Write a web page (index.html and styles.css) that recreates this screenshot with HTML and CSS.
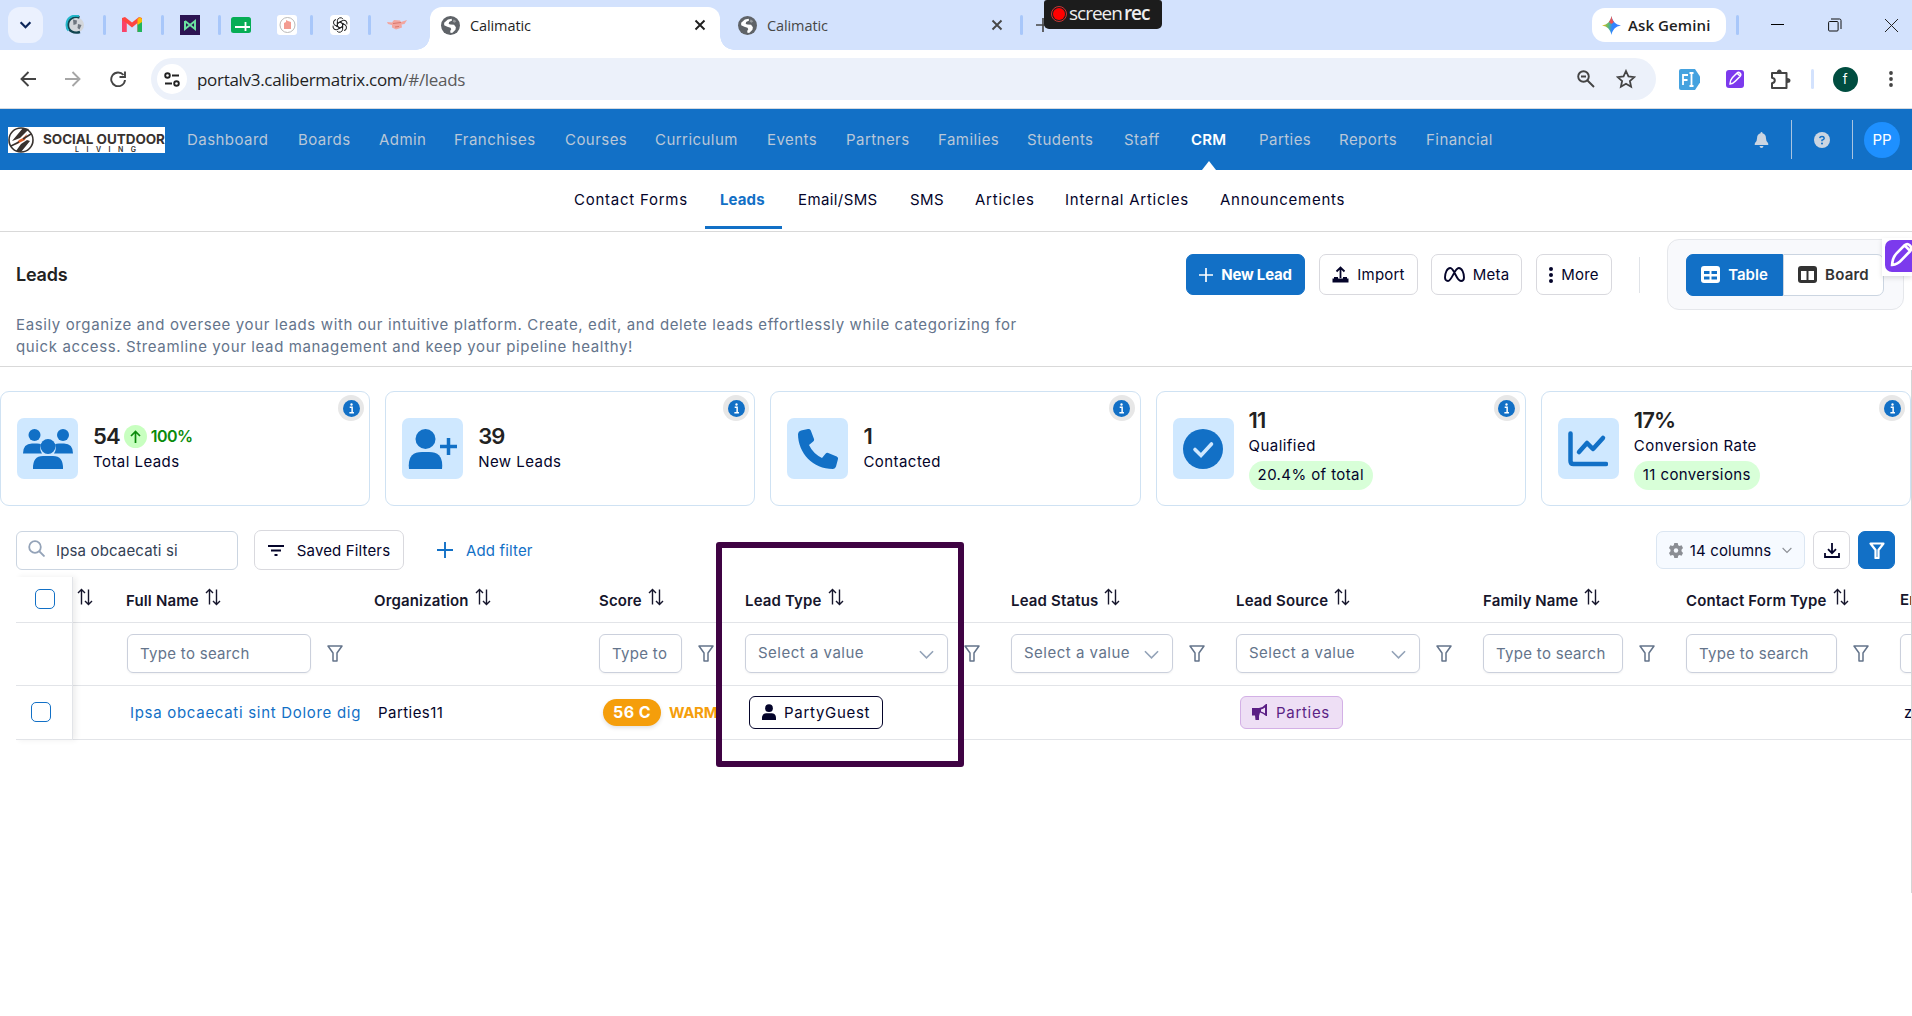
FILE: index.html
```
<!DOCTYPE html>
<html lang="en">
<head>
    <meta charset="UTF-8">
    <meta name="viewport" content="width=device-width, initial-scale=1.0">
    <title>Calimatic</title>
    <link rel="stylesheet" href="styles.css">
</head>
<body>

<!-- Shared icons -->
<svg class="sprite">
    <symbol id="globe" viewBox="0 0 18 18"><circle cx="9" cy="9" r="9" fill="#5f6368"/><path d="M3 6.500l3.500-3.200 3.600-.8.4 1.800-2.800 1.400-.4 1.800 1.800.5 3.300.3 1.700 2.400-.4 2.300-2.800 2.800-1.800.4-.4-2 1-1.600-.7-1.500-3-.8L3 8.800z" fill="#fff"/><path d="M12 3l2.500 2-1.500 1.500-2-1z" fill="#fff" opacity=".35"/></symbol>
    <symbol id="close" viewBox="0 0 12 12"><path d="M1.500 1.500l9 9M10.500 1.500l-9 9" fill="none" stroke="currentColor" stroke-width="1.900"/></symbol>
    <symbol id="sort" viewBox="0 0 16 18"><path d="M4.500 16.500V1.500M1 5l3.500-3.500L8 5M11.500 1.500v15M8 13l3.500 3.500L15 13" fill="none" stroke="currentColor" stroke-width="1.400"/></symbol>
    <symbol id="funnel" viewBox="0 0 16 17"><path d="M1 1h14L10 8v8H6V8z" fill="none" stroke="currentColor" stroke-width="1.500" stroke-linejoin="round"/></symbol>
    <symbol id="funnel-bold" viewBox="0 0 16 17"><path d="M1.500 1.500h13L9.500 8v8h-3V8z" fill="none" stroke="currentColor" stroke-width="2.200" stroke-linejoin="round"/></symbol>
    <symbol id="chevron" viewBox="0 0 16 10"><path d="M1 1l7 7 7-7" fill="none" stroke="currentColor" stroke-width="1.700"/></symbol>
    <symbol id="plus" viewBox="0 0 16 16"><path d="M8 0v16M0 8h16" stroke="currentColor" stroke-width="1.900"/></symbol>
    <symbol id="user" viewBox="0 0 16 18"><circle cx="8" cy="4.600" r="4.400" fill="currentColor"/><path d="M0 18v-2.500C0 12 2.500 10.500 5 10.500h6c2.500 0 5 1.500 5 5V18z" fill="currentColor"/></symbol>
    <symbol id="info" viewBox="0 0 16 16"><circle cx="8" cy="8" r="8" fill="#1270c6"/><path d="M6.300 6.800h2.300v5M6 12h4.300" fill="none" stroke="#fff" stroke-width="1.400"/><circle cx="8" cy="4.200" r="1.100" fill="#fff"/></symbol>
    <symbol id="pen" viewBox="0 0 18 18"><path d="M4 14c.2-3 1-5 2.500-6.500L11 3c2-1.800 5 1 3.200 3.200L9.500 11C8 12.700 6.300 13.800 4 14zM11 3l3.200 3.200" fill="none" stroke="#fff" stroke-width="1.500"/></symbol>
</svg>

<!-- Tabs -->
<div class="tabstrip">
    <span class="tab-search"><svg width="13" height="8" viewBox="0 0 14 9"><path d="M1.500 1.500L7 7l5.500-5.500" fill="none" stroke="#0b2559" stroke-width="2.500"/></svg></span>
    <svg class="fav" viewBox="0 0 20 20"><circle cx="11.500" cy="10" r="7.500" fill="#d3d6da"/><path d="M8 4.500l4 1-.5 3.500-3 1zM13 9l3.500 1-2 4.500-2-1.500z" fill="#6f767f"/><path d="M14.500 2.500C9 .5 3 4 3 10s6 9 12 7" fill="none" stroke="#10444f" stroke-width="2.400"/><path d="M14 1C7-.5 1.500 3 1.500 10c0 2 .5 4 2 5.500" fill="none" stroke="#22b7ca" stroke-width="2"/></svg>
    <span class="sep"></span>
    <svg class="fav" viewBox="0 0 20 20"><path d="M0 3v14h4.500V8L10 12.500 15.500 8v9H20V3l-3-1-7 5.500L3 2z" fill="#ff4540"/><path d="M0 17V5l4.500 3v9z" fill="#f9436a"/><path d="M15.500 9L20 6v11h-4.500z" fill="#20b65b"/><path d="M15.500 4L18 2l2 2v3l-4.500 3z" fill="#fcbc05"/></svg>
    <span class="sep"></span>
    <svg class="fav" viewBox="0 0 20 20"><path d="M0 0h20v20H0z" fill="#2b1452"/><path d="M5 6v8l10-8v8L5 6" fill="none" stroke="#6be0a0" stroke-width="2"/></svg>
    <span class="sep"></span>
    <svg class="fav" viewBox="0 0 20 20"><rect y="2" width="20" height="16" rx="2.500" fill="#06ad55"/><path d="M4 12h15M14.500 7v9" stroke="#fff" stroke-width="1.800"/></svg>
    <svg class="fav" viewBox="0 0 20 20"><rect width="20" height="20" rx="3" fill="#fff"/><circle cx="10.500" cy="10" r="7.500" fill="#fff" stroke="#b9b9b9"/><path d="M7 14V8l2-1V5l2 1 3 1v7z" fill="#f39c91"/></svg>
    <span class="sep"></span>
    <svg class="fav" viewBox="0 0 20 20"><rect width="20" height="20" rx="4" fill="#fff"/><g fill="none" stroke="#222" stroke-width="1"><path id="knot" d="M7.400 8.500V5.200A3.200 3.200 0 0 1 12.800 3.700M7.400 8.500l2.600-1.500 4 2.300"/><use href="#knot" transform="rotate(60 10 10)"/><use href="#knot" transform="rotate(120 10 10)"/><use href="#knot" transform="rotate(180 10 10)"/><use href="#knot" transform="rotate(240 10 10)"/><use href="#knot" transform="rotate(300 10 10)"/></g></svg>
    <span class="sep"></span>
    <svg class="fav" viewBox="0 0 20 20"><path d="M0 7l5 .5L7 5l6 .5 1 1.500L20 5l-2.500 4-3 .5.500 3L9 14.500 5 12.500 5 10 1 9z" fill="#f2a6a0"/><path d="M6 8.500l8-1M8 12l4-.5" stroke="#d9776c"/></svg>
    <div class="tab active">
        <svg width="19" height="19"><use href="#globe"/></svg>
        <span>Calimatic</span>
        <svg class="x" width="12" height="12"><use href="#close"/></svg>
    </div>
    <div class="tab">
        <svg width="19" height="19"><use href="#globe"/></svg>
        <span>Calimatic</span>
        <svg class="x" width="12" height="12"><use href="#close"/></svg>
    </div>
    <span class="sep"></span>
    <svg width="14" height="14" class="new-tab"><use href="#plus"/></svg>
    <div class="gemini">
        <svg width="19" height="19" viewBox="0 0 18 18"><defs><linearGradient id="gem" x1="0" y1=".4" x2="1" y2=".5"><stop offset="0" stop-color="#fbbc04"/><stop offset=".35" stop-color="#5bb974"/><stop offset=".55" stop-color="#3186ff"/><stop offset="1" stop-color="#3f80ff"/></linearGradient></defs><path d="M9 0c.8 5 4 8.200 9 9-5 .8-8.200 4-9 9-.8-5-4-8.200-9-9 5-.8 8.200-4 9-9z" fill="url(#gem)"/><path d="M9 0c.5 3 1.200 4.500 2.300 5.800L9 7.500 6.500 5.800C7.700 4.300 8.600 2.500 9 0z" fill="#ea5357"/></svg>
        Ask Gemini
    </div>
    <span class="sep"></span>
    <svg width="13" height="13" viewBox="0 0 13 13"><path d="M0 5.500h13" stroke="#000"/></svg>
    <svg width="14" height="14" viewBox="0 0 14 14" fill="none" stroke="#111"><rect x=".6" y="3.500" width="9.500" height="9.500" rx="1"/><path d="M3 1h8.500q1.500 0 1.500 1.500V11"/></svg>
    <svg width="13" height="13" viewBox="0 0 13 13"><path d="M0 0l13 13M13 0L0 13" stroke="#222"/></svg>
    <div class="screenrec"><i></i>screen<b>rec</b></div>
</div>

<!-- Address bar -->
<div class="toolbar">
    <svg width="16" height="16" viewBox="0 0 16 16" fill="none" stroke="#444" stroke-width="1.900"><path d="M16 8H2M8.500 1L1.500 8l7 7"/></svg>
    <svg width="16" height="16" viewBox="0 0 16 16" fill="none" stroke="#a6a6a6" stroke-width="1.900"><path d="M0 8h14M7.500 1l7 7-7 7"/></svg>
    <svg width="16" height="16" viewBox="0 0 16 16" fill="none" stroke="#444" stroke-width="1.900"><path d="M13.500 4A6.900 6.900 0 1 0 15 9M15 .5v5.500H9.500"/></svg>
    <div class="address">
        <span class="site"><svg width="16" height="15" viewBox="0 0 16 15" fill="none" stroke="#222" stroke-width="1.900"><circle cx="3.500" cy="3.500" r="2.300"/><path d="M8 3.500h7M1 11.500h7"/><circle cx="12.500" cy="11.500" r="2.300"/></svg></span>
        <span class="url">portalv3.calibermatrix.com<em>/#/leads</em></span>
        <svg width="18" height="18" viewBox="0 0 18 18" fill="none" stroke="#444" stroke-width="1.900"><circle cx="6.500" cy="6.500" r="5.300"/><path d="M10.500 10.500l6.500 6.500M4 6.500h5"/></svg>
        <svg width="20" height="20" viewBox="0 0 18 18"><path d="M9 1.800l2.200 4.900 5.300.6-4 3.500 1.100 5.200L9 13.300 4.400 16l1.100-5.200-4-3.500 5.300-.6z" fill="none" stroke="#444" stroke-width="1.600"/></svg>
    </div>
    <svg width="21" height="21" viewBox="0 0 21 21"><path d="M2 0h14l5 7.500v6L16 21H2q-2 0-2-2V2q0-2 2-2z" fill="#45a2df"/><path d="M4 16V6h5M4 11h4.500M10.500 4h4M10.500 17h4M12.500 4v13" fill="none" stroke="#fff" stroke-width="1.800"/></svg>
    <span class="pen-ext"><svg width="18" height="18"><use href="#pen"/></svg></span>
    <svg width="21" height="21" viewBox="0 0 21 21"><path d="M2 4h14.500v15H2v-4.800q2.800-.5 2.800-2.700T2 8.800z" fill="none" stroke="#444" stroke-width="2" stroke-linejoin="round"/><path d="M6.800 4q0-3.500 2.500-3.500T11.800 4zM17 9q3.500 0 3.500 2.500T17 14z" fill="#444"/></svg>
    <span class="sep pale"></span>
    <span class="profile">f</span>
    <svg width="4" height="16" viewBox="0 0 4 16" fill="#444"><circle cx="2" cy="2" r="1.900"/><circle cx="2" cy="8" r="1.900"/><circle cx="2" cy="14" r="1.900"/></svg>
</div>

<!-- Main navigation -->
<header class="header">
    <div class="logo">
        <svg width="27" height="26" viewBox="0 0 27 26"><circle cx="13" cy="13" r="12" fill="#fff" stroke="#38322f" stroke-width="1.600"/><path d="M4 14L15 1l6 1-9 9-5 2zM13 25l9-11-3-1-6 4-5 7z" fill="#38322f"/><path d="M7 18l4-5 4-2 4-4-2 6-4 2z" fill="#e0602a"/><path d="M3 19l8-4M15 12l8-5" stroke="#38322f" stroke-width="1.500"/></svg>
        <div><strong>SOCIAL OUTDOOR</strong><small>LIVING</small></div>
    </div>
    <nav class="main-nav">
        <a>Dashboard</a><a>Boards</a><a>Admin</a><a>Franchises</a><a>Courses</a><a>Curriculum</a><a>Events</a><a>Partners</a><a>Families</a><a>Students</a><a>Staff</a><a class="current">CRM</a><a>Parties</a><a>Reports</a><a>Financial</a>
    </nav>
    <div class="header-right">
        <span><svg width="15" height="16" viewBox="0 0 15 16" fill="#cbd5e1"><path d="M7.500 0q1 0 1 1.300Q12 2.200 12 6.500q0 3 2 4.500.8 1.800 0 2H1q-.8-.2 0-2 2-1.500 2-4.500 0-4.300 3.500-5.200Q6.500 0 7.500 0zM5.500 14h4q-.3 2-2 2t-2-2z"/></svg></span>
        <span><svg width="16" height="16" viewBox="0 0 16 16"><circle cx="8" cy="8" r="8" fill="#cbd5e1"/><path d="M5.700 6.200Q6 4.500 8 4.500t2.200 1.700Q10.200 7.500 8 8.300v1" fill="none" stroke="#1270c6" stroke-width="1.500"/><circle cx="8" cy="11.500" r="1" fill="#1270c6"/></svg></span>
        <span class="avatar">PP</span>
    </div>
</header>

<nav class="sub-nav">
    <a>Contact Forms</a><a class="current">Leads</a><a>Email/SMS</a><a>SMS</a><a>Articles</a><a>Internal Articles</a><a>Announcements</a>
</nav>

<!-- Page heading -->
<section class="page-head">
    <div class="head-row">
        <h1>Leads</h1>
        <div class="actions">
            <button class="btn primary new"><svg width="14" height="14"><use href="#plus"/></svg>New Lead</button>
            <button class="btn import"><svg width="17" height="17" viewBox="0 0 17 17" fill="none" stroke="#04042a" stroke-width="1.800"><path d="M8.500 12V1.500M4.500 5.500l4-4 4 4"/><path d="M.5 14.500h16" stroke-width="4"/><path d="M2 12h4M11 12h4" stroke-width="2"/></svg>Import</button>
            <button class="btn meta"><svg width="21" height="15" viewBox="0 0 21 15"><path d="M1 10.500C1 6 3 1 6.200 1c4.300 0 6 13 10.800 13 2 0 3-1.500 3-3.500C20 6 18 1 14.800 1 10.500 1 8 14 4 14c-2 0-3-1.500-3-3.500z" fill="none" stroke="#04042a" stroke-width="1.900"/></svg>Meta</button>
            <button class="btn more"><svg width="4" height="16" viewBox="0 0 4 16" fill="#04042a"><circle cx="2" cy="2" r="2"/><circle cx="2" cy="8" r="2"/><circle cx="2" cy="14" r="2"/></svg>More</button>
            <span class="divider"></span>
            <div class="view-toggle">
                <button class="on"><svg width="19" height="17" viewBox="0 0 19 17"><rect width="19" height="17" rx="3" fill="#fff"/><path d="M3 5h5.500v3H3zM10.500 5H16v3h-5.500zM3 10.500h5.500v3H3zM10.500 10.500H16v3h-5.500z" fill="#1270c6"/></svg>Table</button>
                <button><svg width="19" height="17" viewBox="0 0 19 17"><rect width="19" height="17" rx="3" fill="#333"/><path d="M3 5h5.500v9H3zM10.500 5H16v9h-5.500z" fill="#fff"/></svg>Board</button>
            </div>
        </div>
    </div>
    <p>Easily organize and oversee your leads with our intuitive platform. Create, edit, and delete leads effortlessly while categorizing for<br>quick access. Streamline your lead management and keep your pipeline healthy!</p>
</section>

<!-- Stats -->
<section class="stats">
    <div class="card">
        <div class="icon"><svg width="50" height="40" viewBox="0 0 50 40" fill="#1270c6"><circle cx="11.500" cy="6" r="6"/><circle cx="40" cy="6" r="6"/><path d="M0 24.500q0-10 9-10h5q3 0 4 1-2 5 1 9zM50 24.500q0-10-9-10h-5q-3 0-4 1 2 5-1 9z"/><circle cx="25" cy="17.500" r="7.500"/><path d="M10 40q-.5-13 10-13h10q10.500 0 10 13z"/></svg></div>
        <div class="text"><div class="value">54 <span class="up"><svg width="11" height="13" viewBox="0 0 11 13" fill="none" stroke="#0a8a0a" stroke-width="1.700"><path d="M5.500 13V1.500M1 6l4.500-4.500L10 6"/></svg></span><span class="pct">100%</span></div><div>Total Leads</div></div>
        <span class="info"><svg width="17" height="17"><use href="#info"/></svg></span>
    </div>
    <div class="card">
        <div class="icon"><svg width="50" height="40" viewBox="0 0 50 40" fill="#1270c6"><circle cx="17.500" cy="10" r="10"/><path d="M1 40q-2-17 13-17h7q15 0 13 17z"/><path d="M40.500 9v17M32 17.500h17" stroke="#1270c6" stroke-width="3.500"/></svg></div>
        <div class="text"><div class="value">39</div><div>New Leads</div></div>
        <span class="info"><svg width="17" height="17"><use href="#info"/></svg></span>
    </div>
    <div class="card">
        <div class="icon"><svg width="40" height="40" viewBox="0 0 40 40"><path d="M3 1.500L10 0q2-.3 2.800 1.500L16 10q.4 1.500-.8 2.500L11 16q4 8.500 13 13l3.500-4.300q1.200-1.200 2.700-.7l8.500 3.500Q40.300 28.500 40 30l-2 7.500q-.7 2.200-3 2.500C15 40 0 24 0 5q.2-2.700 3-3.500z" fill="#1270c6"/></svg></div>
        <div class="text"><div class="value">1</div><div>Contacted</div></div>
        <span class="info"><svg width="17" height="17"><use href="#info"/></svg></span>
    </div>
    <div class="card">
        <div class="icon"><svg width="40" height="40" viewBox="0 0 40 40"><circle cx="20" cy="20" r="20" fill="#1270c6"/><path d="M12 20.500l6 6 10.500-11.500" fill="none" stroke="#cfe8ff" stroke-width="3.600" stroke-linecap="round"/></svg></div>
        <div class="text"><div class="value">11</div><div>Qualified</div><div class="pill">20.4% of total</div></div>
        <span class="info"><svg width="17" height="17"><use href="#info"/></svg></span>
    </div>
    <div class="card">
        <div class="icon"><svg width="40" height="36" viewBox="0 0 40 36" fill="none" stroke="#1270c6" stroke-width="4.500" stroke-linecap="round" stroke-linejoin="round"><path d="M2.500 2.500V30q0 3 3 3H38"/><path d="M11 21l8-9 6 6 10-11"/></svg></div>
        <div class="text"><div class="value">17%</div><div>Conversion Rate</div><div class="pill">11 conversions</div></div>
        <span class="info"><svg width="17" height="17"><use href="#info"/></svg></span>
    </div>
</section>

<!-- Filters -->
<div class="filters">
    <div class="search"><svg width="17" height="17" viewBox="0 0 17 17" fill="none" stroke="#94a3b8" stroke-width="1.800"><circle cx="7" cy="7" r="5.800"/><path d="M11 11l5.500 5.500"/></svg>Ipsa obcaecati si</div>
    <button class="btn saved"><svg width="16" height="11" viewBox="0 0 16 11" stroke="#04042a" stroke-width="2"><path d="M0 1h16M3 5.500h10M6.500 10h3"/></svg>Saved Filters</button>
    <a class="add"><svg width="16" height="16"><use href="#plus"/></svg>Add filter</a>
    <div class="tools">
        <button class="btn columns"><svg width="14" height="15" viewBox="0 0 14 15"><path d="M5.300 0h3.400l.5 2.200 1.300.8 2.100-.7L14 5l-1.500 1.700v1.600L14 10l-1.400 2.700-2.100-.7-1.300.8-.5 2.200H5.300l-.5-2.200-1.300-.8-2.100.7L0 10l1.500-1.700V6.700L0 5l1.400-2.700 2.100.7 1.300-.8z" fill="#8b8e94"/><circle cx="7" cy="7.500" r="2.200" fill="#f6faff"/></svg>14 columns<svg width="10" height="7" class="grey"><use href="#chevron"/></svg></button>
        <button class="btn square"><svg width="16" height="15" viewBox="0 0 16 15" fill="none" stroke="#04042a" stroke-width="1.800"><path d="M8 0v10M4 6.200l4 4 4-4M1 10v4h14v-4"/></svg></button>
        <button class="btn square primary"><svg width="16" height="17"><use href="#funnel-bold"/></svg></button>
    </div>
</div>

<!-- Leads table -->
<div class="table-wrap">
    <table>
        <colgroup><col class="c0"><col class="c1"><col class="c2"><col class="c3"><col class="c4"><col class="c5"><col class="c6"><col class="c7"><col class="c8"><col class="c9"><col class="c10"></colgroup>
        <tr class="titles">
            <th class="frozen"><i class="check"></i></th>
            <th><svg><use href="#sort"/></svg></th>
            <th>Full Name<svg><use href="#sort"/></svg></th>
            <th>Organization<svg><use href="#sort"/></svg></th>
            <th>Score<svg><use href="#sort"/></svg></th>
            <th>Lead Type<svg><use href="#sort"/></svg></th>
            <th>Lead Status<svg><use href="#sort"/></svg></th>
            <th>Lead Source<svg><use href="#sort"/></svg></th>
            <th>Family Name<svg><use href="#sort"/></svg></th>
            <th>Contact Form Type<svg><use href="#sort"/></svg></th>
            <th>Email</th>
        </tr>
        <tr class="search-row">
            <td class="frozen"></td>
            <td></td>
            <td><div class="first"><span class="field w184">Type to search</span><svg><use href="#funnel"/></svg></div></td>
            <td></td>
            <td><div><span class="field w83">Type to</span><svg><use href="#funnel"/></svg></div></td>
            <td><div><span class="field select w203">Select a value<svg><use href="#chevron"/></svg></span><svg><use href="#funnel"/></svg></div></td>
            <td><div><span class="field select w162">Select a value<svg><use href="#chevron"/></svg></span><svg><use href="#funnel"/></svg></div></td>
            <td><div><span class="field select w184">Select a value<svg><use href="#chevron"/></svg></span><svg><use href="#funnel"/></svg></div></td>
            <td><div><span class="field w140">Type to search</span><svg><use href="#funnel"/></svg></div></td>
            <td><div><span class="field w151">Type to search</span><svg><use href="#funnel"/></svg></div></td>
            <td><div><span class="field w184"></span></div></td>
        </tr>
        <tr class="lead">
            <td class="frozen"><i class="check"></i></td>
            <td></td>
            <td class="name">Ipsa obcaecati sint Dolore dig</td>
            <td>Parties11</td>
            <td><span class="score">56 C</span><span class="warm">WARM</span></td>
            <td><span class="tag guest"><svg width="14" height="16"><use href="#user"/></svg>PartyGuest</span></td>
            <td></td>
            <td><span class="tag parties"><svg width="16" height="16" viewBox="0 0 16 16"><path d="M0 4h7q4-.5 7-4h1v12h-1q-3-3-6-3.500L7 12v4H3.500L3 11.500H0z" fill="#5b1f85"/><path d="M9 5.500q2-.5 4-2v6q-2-1.500-4-2z" fill="#eedff5"/></svg>Parties</span></td>
            <td></td>
            <td></td>
            <td>z</td>
        </tr>
    </table>
    <div class="highlight"></div>
</div>

<div class="pen-widget"><span><svg width="32" height="32"><use href="#pen"/></svg></span></div>
<div class="scrollbar"></div>

</body>
</html>
```
FILE: styles.css
```
/* Global styles */
* {
    margin: 0;
    padding: 0;
    box-sizing: border-box;
}

body {
    height: 1016px;
    position: relative;
    overflow: hidden;
    background: #fff;
    font-family: Inter, 'Liberation Sans', sans-serif;
    font-size: 15px;
    letter-spacing: 0.45px;
    color: #04042a;
}

svg {
    display: block;
    flex: none;
}

.sprite {
    position: absolute;
    width: 0;
    height: 0;
}

button {
    font: inherit;
    letter-spacing: inherit;
    color: inherit;
}

/* Browser tabs */
.tabstrip {
    height: 50px;
    position: relative;
    padding-left: 8px;
    background: #d3e2fd;
    display: grid;
    grid-template-columns: 57px 38px 19px 39px 19px 38px 13px 46px 33px 20px 38px 19px 43px 290px 300px 16px 556px 144px 35px 57px 57px 20px;
    align-items: center;
    font-family: 'Open Sans', 'Noto Sans', sans-serif;
    font-size: 14.500px;
    letter-spacing: -0.1px;
    color: #1f1f1f;
}

.tab-search {
    width: 35px;
    height: 36px;
    border-radius: 12px;
    background: #ebf1fe;
    display: flex;
    align-items: center;
    justify-content: center;
}

.fav {
    width: 20px;
    height: 20px;
}

.sep {
    width: 3px;
    height: 20px;
    border-radius: 2px;
    background: #a8c7fa;
}

.sep.pale {
    background: #d3e2fd;
    margin-left: -2px;
}

.tab {
    height: 43px;
    align-self: end;
    display: flex;
    align-items: center;
    gap: 10px;
    padding: 0 14px 7px 18px;
    position: relative;
    color: #474747;
}

.tab.active {
    background: #fff;
    border-radius: 12px 12px 0 0;
    padding-left: 11px;
    color: #1f1f1f;
}

.tab.active::before, .tab.active::after {
    content: "";
    position: absolute;
    bottom: 0;
    width: 14px;
    height: 14px;
}

.tab.active::before {
    left: -14px;
    background: radial-gradient(circle at 0 0, transparent 13.500px, #fff 14px);
}

.tab.active::after {
    right: -14px;
    background: radial-gradient(circle at 100% 0, transparent 13.500px, #fff 14px);
}

.tab .x {
    margin-left: auto;
}

.tab:not(.active) .x {
    margin-right: 3px;
}

.new-tab {
    color: #474747;
}

.gemini {
    width: 134px;
    height: 34px;
    border-radius: 13px;
    background: #fff;
    display: flex;
    align-items: center;
    gap: 7px;
    padding-left: 10px;
    font-size: 15px;
    font-weight: 600;
    letter-spacing: 0.1px;
    white-space: nowrap;
}

.screenrec {
    position: absolute;
    left: 1044px;
    top: 0;
    width: 118px;
    height: 29px;
    border-radius: 3px 3px 5px 5px;
    background: #1c1c1c;
    color: #eee;
    display: flex;
    align-items: center;
    padding: 0 0 3px 8px;
    font-size: 19px;
    letter-spacing: -1px;
}

.screenrec i {
    width: 12px;
    height: 12px;
    border-radius: 50%;
    background: #f00;
    outline: 1px solid #c33;
    outline-offset: 1px;
    margin: 2px 4px 0 1px;
}

.screenrec b {
    font-weight: 600;
    margin-left: 2px;
}

/* Address bar */
.toolbar {
    height: 59px;
    border-bottom: 1px solid #d5d9df;
    padding-left: 20px;
    display: grid;
    grid-template-columns: 45px 45px 41px 1528px 47px 44px 43px 22px 54px 10px;
    align-items: center;
}

.address {
    width: 1505px;
    height: 42px;
    border-radius: 21px;
    background: #ecf1fa;
    display: flex;
    align-items: center;
    gap: 21px;
    padding: 0 20px 0 6px;
    font-family: 'Open Sans', 'Noto Sans', sans-serif;
    font-size: 17px;
    letter-spacing: -0.3px;
    color: #1f1f1f;
}

.site {
    width: 30px;
    height: 30px;
    border-radius: 50%;
    background: #fff;
    display: flex;
    align-items: center;
    justify-content: center;
    margin-right: -11px;
}

.url {
    flex: 1;
}

.url em {
    font-style: normal;
    color: #5a5a5a;
}

.pen-ext {
    width: 18px;
    height: 18px;
    border-radius: 3px;
    background: #7c3aed;
}

.profile {
    width: 25px;
    height: 25px;
    border-radius: 50%;
    background: #004d40;
    color: #fff;
    font-size: 13px;
    text-align: center;
    line-height: 24px;
    margin-left: -2px;
}

/* Main navigation */
.header {
    height: 61px;
    background: #1270c6;
    padding-left: 8px;
    display: flex;
    align-items: center;
}

.logo {
    width: 157px;
    height: 26px;
    background: #fff;
    overflow: hidden;
    display: flex;
    gap: 8px;
    color: #38322f;
}

.logo strong {
    display: block;
    font-size: 13.500px;
    font-weight: 700;
    letter-spacing: -0.05px;
    line-height: 14px;
    margin-top: 5px;
    white-space: nowrap;
}

.logo small {
    display: block;
    font-size: 7px;
    font-weight: 600;
    letter-spacing: 7.500px;
    line-height: 8px;
    padding-left: 32px;
}

.main-nav {
    margin-left: 22px;
    display: grid;
    grid-template-columns: 111px 81px 75px 111px 90px 112px 79px 92px 89px 97px 67px 68px 80px 87px 75px;
    line-height: 61px;
    color: #b9c7d8;
}

.main-nav .current {
    color: #fff;
    font-weight: 600;
    letter-spacing: 0.2px;
    position: relative;
}

.main-nav .current::after {
    content: "";
    position: absolute;
    left: 11px;
    bottom: 0;
    border: 7px solid transparent;
    border-top: 0;
    border-bottom: 9px solid #fff;
}

.header-right {
    margin-left: auto;
    display: flex;
    align-items: center;
    padding-right: 12px;
}

.header-right span:not(.avatar) {
    width: 61px;
    height: 39px;
    border-right: 1px solid #a9c4e0;
    display: flex;
    align-items: center;
    justify-content: center;
}

.header-right .avatar {
    width: 36px;
    height: 36px;
    border-radius: 50%;
    background: #1e90ff;
    color: #fff;
    text-align: center;
    line-height: 36px;
    margin-left: 11px;
    letter-spacing: 0;
}

.sub-nav {
    height: 62px;
    border-bottom: 1px solid #d9d9d9;
    padding-left: 574px;
    display: grid;
    grid-template-columns: 146px 78px 112px 65px 90px 155px 130px;
    line-height: 60px;
    letter-spacing: 0.75px;
    white-space: nowrap;
}

.sub-nav a:nth-child(3), .sub-nav a:nth-child(4) {
    letter-spacing: 0.4px;
}

.sub-nav .current {
    position: relative;
    color: #1270c6;
    font-weight: 700;
    letter-spacing: 0.1px;
}

.sub-nav .current::after {
    content: "";
    position: absolute;
    left: -15px;
    top: 56px;
    width: 77px;
    height: 3px;
    background: #1270c6;
}

/* Page heading */
.page-head {
    height: 135px;
    border-bottom: 1px solid #d9d9d9;
    padding: 7px 8px 0 16px;
}

.head-row {
    display: flex;
    justify-content: space-between;
    align-items: center;
    height: 71px;
}

h1 {
    font-size: 18px;
    font-weight: 600;
    letter-spacing: -0.2px;
    color: #222;
}

.page-head p {
    margin-top: 4px;
    line-height: 22px;
    letter-spacing: 0.62px;
    color: #64748b;
    white-space: nowrap;
}

.actions {
    display: flex;
    align-items: center;
}

.btn {
    height: 41px;
    border: 1px solid #d9d9de;
    border-radius: 7px;
    background: #fff;
    display: flex;
    align-items: center;
    justify-content: center;
    white-space: nowrap;
}

.btn.primary {
    background: #1270c6;
    border-color: #1270c6;
    color: #fff;
}

.new {
    width: 119px;
    gap: 8px;
    font-weight: 700;
    letter-spacing: -0.2px;
    margin-right: 14px;
}

.import {
    width: 99px;
    gap: 8px;
    margin-right: 13px;
}

.meta {
    width: 91px;
    gap: 8px;
    margin-right: 14px;
}

.more {
    width: 76px;
    gap: 8px;
}

.import, .meta, .more {
    letter-spacing: 0.2px;
}

.divider {
    width: 1px;
    height: 36px;
    background: #e0e3e8;
    margin: 0 27px;
}

.view-toggle {
    width: 237px;
    height: 71px;
    border: 1px solid #e5e7eb;
    border-radius: 12px;
    background: #f8f9fc;
    display: flex;
    align-items: center;
    padding-left: 18px;
}

.view-toggle button {
    width: 101px;
    height: 42px;
    border: 1px solid #cbd5e1;
    border-radius: 0 7px 7px 0;
    background: #fff;
    color: #333;
    font-weight: 600;
    letter-spacing: 0.2px;
    display: flex;
    align-items: center;
    justify-content: center;
    gap: 8px;
}

.view-toggle .on {
    width: 97px;
    border-color: #1270c6;
    border-radius: 7px 0 0 7px;
    background: #1270c6;
    color: #fff;
    letter-spacing: 0;
}

/* Stats */
.stats {
    margin: 24px 1px 0 0;
    display: grid;
    grid-template-columns: repeat(5, 1fr);
    gap: 15px;
}

.card {
    height: 115px;
    border: 1px solid #cfe2f3;
    border-radius: 9px;
    position: relative;
    display: flex;
    align-items: center;
    gap: 15px;
    padding-left: 16px;
}

.icon {
    width: 61px;
    height: 61px;
    border-radius: 7px;
    background: #cfe8ff;
    display: flex;
    align-items: center;
    justify-content: center;
}

.text {
    line-height: 22px;
    padding-bottom: 3px;
}

.value {
    height: 30px;
    font-size: 22px;
    font-weight: 600;
    letter-spacing: -0.9px;
    line-height: 30px;
    color: #222;
    display: flex;
    align-items: center;
}

.up {
    width: 23px;
    height: 23px;
    border-radius: 50%;
    background: #c8ffc0;
    display: flex;
    align-items: center;
    justify-content: center;
    margin: 0 4px 0 4px;
}

.pct {
    color: #0a8a0a;
    font-size: 16px;
    letter-spacing: -0.5px;
}

.pill {
    height: 29px;
    border-radius: 15px;
    background: #d8ffd8;
    line-height: 28px;
    letter-spacing: 0.4px;
    padding: 0 9px;
    margin-top: 4px;
}

.info {
    position: absolute;
    right: 5px;
    top: 3px;
    width: 26px;
    height: 26px;
    border-radius: 50%;
    background: #e7e7e7;
    display: flex;
    align-items: center;
    justify-content: center;
}

/* Filters */
.filters {
    height: 40px;
    margin: 24px 17px 0 16px;
    display: flex;
    align-items: center;
    letter-spacing: 0.15px;
}

.search {
    width: 222px;
    height: 39px;
    border: 1px solid #cbd5e1;
    border-radius: 6px;
    display: flex;
    align-items: center;
    gap: 11px;
    padding-left: 11px;
    color: #334155;
}

.search svg {
    margin-top: -3px;
}

.saved {
    width: 150px;
    height: 40px;
    gap: 13px;
    margin-left: 16px;
}

.add {
    display: flex;
    align-items: center;
    gap: 13px;
    margin-left: 33px;
    color: #1270c6;
}

.tools {
    margin-left: auto;
    display: flex;
    gap: 8px;
}

.tools .btn {
    height: 38px;
}

.tools .columns {
    width: 149px;
    gap: 7px;
    border-color: #dbe6f2;
    background: #f6faff;
}

.columns .grey {
    margin-left: 4px;
    color: #8b8e94;
}

.square {
    width: 37px;
}

/* Leads table */
.table-wrap {
    position: relative;
    margin: 7px 0 0 16px;
    overflow-x: clip;
}

.table-wrap::after {
    content: "";
    position: absolute;
    inset: 0 auto 0 0;
    width: 56px;
    border-right: 1px solid #e2e4e8;
    box-shadow: 3px 0 6px rgba(0, 0, 0, 0.07);
}

table {
    width: 1940px;
    table-layout: fixed;
    border-collapse: collapse;
}

.c0 { width: 56px; }
.c1 { width: 48px; }
.c2 { width: 248px; }
.c3 { width: 225px; }
.c4 { width: 146px; }
.c5 { width: 266px; }
.c6 { width: 225px; }
.c7 { width: 247px; }
.c8 { width: 203px; }
.c9 { width: 214px; }

th, td {
    border-bottom: 1px solid #e2e4e8;
    padding: 0 6px;
    text-align: left;
    white-space: nowrap;
}

.titles {
    height: 45px;
}

th {
    font-weight: 600;
    letter-spacing: 0.15px;
    color: #16162c;
}

th svg {
    display: inline-block;
    width: 16px;
    height: 18px;
    margin-left: 6px;
    vertical-align: 0;
}

th:nth-child(2) svg {
    margin-left: -1px;
}

.check {
    display: block;
    width: 20px;
    height: 20px;
    border: 1.500px solid #1270c6;
    border-radius: 5px;
    margin-left: 13px;
}

.lead .check {
    margin-left: 9px;
}

.search-row {
    height: 63px;
}

.search-row div {
    display: flex;
    align-items: center;
    gap: 16px;
    color: #64748b;
}

.search-row .first {
    margin-left: 1px;
}

.search-row svg {
    width: 16px;
    height: 17px;
}

.field {
    flex: none;
    height: 39px;
    border: 1px solid #cbd0dc;
    border-radius: 6px;
    display: flex;
    align-items: center;
    padding: 0 13px 0 12px;
    overflow: hidden;
    letter-spacing: 0.3px;
    box-shadow: 0 1px 2px rgba(18, 18, 23, 0.05);
}

.field.select {
    justify-content: space-between;
    padding-bottom: 3px;
    letter-spacing: 0.5px;
}

.field.select svg {
    width: 15px;
    height: 10px;
    margin-top: 5px;
    color: #94a3b8;
}

.w83 { width: 83px; }
.w140 { width: 140px; }
.w151 { width: 151px; }
.w162 { width: 162px; }
.w184 { width: 184px; }
.w203 { width: 203px; }

.lead {
    height: 54px;
}

.lead td {
    padding-left: 10px;
}

.lead td.frozen {
    padding-left: 6px;
}

.lead .name {
    color: #1270c6;
    letter-spacing: 0.7px;
    padding-right: 0;
}

.score {
    display: inline-block;
    width: 58px;
    height: 27px;
    border-radius: 14px;
    text-align: center;
    margin-right: 8px;
    background: #f59e0b;
    color: #fff;
    font-size: 16px;
    font-weight: 700;
    line-height: 26px;
    box-shadow: 0 2px 4px rgba(0, 0, 0, 0.12);
}

.warm {
    color: #f59e0b;
    font-weight: 700;
    letter-spacing: -0.3px;
}

.tag {
    width: 134px;
    height: 33px;
    border: 1px solid #04042a;
    border-radius: 6px;
    display: flex;
    align-items: center;
    gap: 8px;
    padding-left: 12px;
    letter-spacing: 0.7px;
}

.tag.parties {
    width: 103px;
    border-color: #d3b0e6;
    background: #eedff5;
    color: #5b1f85;
    padding-left: 11px;
}

/* Marked column */
.highlight {
    position: absolute;
    left: 700px;
    top: -35px;
    width: 248px;
    height: 225px;
    border: 6px solid #3f0343;
    border-radius: 3px;
    z-index: 2;
}

.pen-widget {
    position: absolute;
    right: 0;
    top: 238px;
    width: 30px;
    height: 38px;
    background: #fff;
    box-shadow: 0 2px 5px rgba(0, 0, 0, 0.12);
    padding: 2px 0 0 3px;
    overflow: hidden;
}

.pen-widget span {
    display: block;
    width: 36px;
    height: 32px;
    border-radius: 7px;
    background: #7c3aed;
}

.scrollbar {
    position: absolute;
    right: 0;
    top: 370px;
    width: 1px;
    height: 523px;
    background: #d5d5d5;
}
```
